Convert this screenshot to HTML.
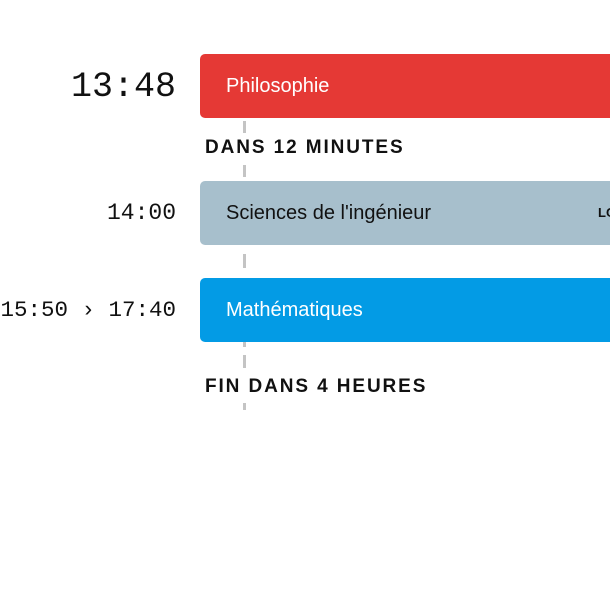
<!DOCTYPE html>
<html><head><meta charset="utf-8"><style>
html,body{margin:0;padding:0;background:#fff;width:610px;height:613px;overflow:hidden;position:relative;font-family:"Liberation Sans",sans-serif}
.t{position:absolute;right:434px;font-family:"Liberation Mono",monospace;color:#111;white-space:nowrap;text-align:right}
.b{position:absolute;left:200px;width:430px;height:64px;border-radius:5px;box-sizing:border-box;padding-left:26px;line-height:64px;font-size:20px}
.l{position:absolute;left:205px;font-weight:bold;font-size:19px;letter-spacing:1.9px;color:#111}
.d{position:absolute;left:243px;width:3px;background:#c4c4c4}
</style></head><body>
<div class="d" style="top:121px;height:12px"></div>
<div class="d" style="top:165px;height:12px"></div>
<div class="d" style="top:254px;height:14px"></div>
<div class="d" style="top:342px;height:5px"></div>
<div class="d" style="top:355px;height:13px"></div>
<div class="d" style="top:403px;height:7px"></div>

<div class="t" style="top:67px;font-size:35px;line-height:40px">13:48</div>
<div class="b" style="top:54px;background:#e53935;color:#fff">Philosophie</div>
<div class="l" style="top:137px">DANS 12 MINUTES</div>

<div class="t" style="top:200px;font-size:23px;line-height:26px">14:00</div>
<div class="b" style="top:181px;background:#a7bfcc;color:#111">Sciences de l'ingénieur<span style="position:absolute;left:398px;font-size:13px;font-weight:bold">LO</span></div>

<div class="t" style="top:297px;font-size:22.5px;line-height:26px;letter-spacing:0px">15:50 › 17:40</div>
<div class="b" style="top:278px;background:#039be5;color:#fff">Mathématiques</div>
<div class="l" style="top:376px">FIN DANS 4 HEURES</div>
</body></html>
